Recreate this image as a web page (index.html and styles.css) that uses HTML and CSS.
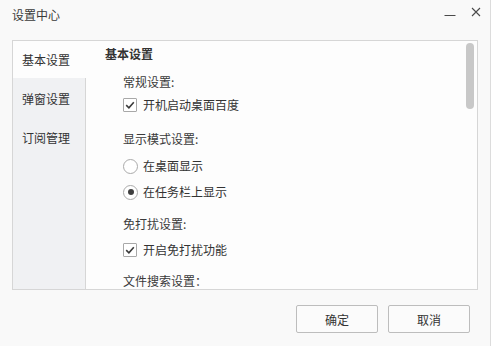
FILE: index.html
```html
<!DOCTYPE html>
<html lang="zh-CN">
<head>
<meta charset="utf-8">
<title>设置中心</title>
<link rel="stylesheet" href="styles.css">
</head>
<body>
<div class="window">
  <header class="titlebar">
    <span class="title">设置中心</span>
    <div class="controls">
      <svg class="ic-min" width="12" height="12" viewBox="0 0 12 12"><line x1="0.5" y1="6.5" x2="11.5" y2="6.5" stroke="#4a4a4a" stroke-width="1"/></svg>
      <svg class="ic-close" width="10" height="10" viewBox="0 0 10 10"><path d="M1 1 L9 9 M9 1 L1 9" stroke="#4a4a4a" stroke-width="1.1" fill="none"/></svg>
    </div>
  </header>

  <div class="panel">
    <nav class="sidebar">
      <div class="tab active">基本设置</div>
      <div class="tab-list">
        <div class="tab">弹窗设置</div>
        <div class="tab">订阅管理</div>
      </div>
    </nav>
    <div class="content">
      <div class="scroll-body">
        <div class="heading">基本设置</div>
        <div class="group">
          <div class="label l1">常规设置:</div>
          <div class="option o-cb1"><span class="checkbox"><svg width="10" height="10" viewBox="0 0 10 10"><path d="M1.2 5.2 L3.9 7.8 L8.8 2.2" stroke="#3a3a3a" stroke-width="1.6" fill="none"/></svg></span>开机启动桌面百度</div>
          <div class="label l2">显示模式设置:</div>
          <div class="option o-r1"><span class="radio"></span>在桌面显示</div>
          <div class="option o-r2"><span class="radio checked"></span>在任务栏上显示</div>
          <div class="label l3">免打扰设置:</div>
          <div class="option o-cb2"><span class="checkbox"><svg width="10" height="10" viewBox="0 0 10 10"><path d="M1.2 5.2 L3.9 7.8 L8.8 2.2" stroke="#3a3a3a" stroke-width="1.6" fill="none"/></svg></span>开启免打扰功能</div>
          <div class="label l4">文件搜索设置：</div>
        </div>
      </div>
      <div class="scrollbar"><div class="thumb"></div></div>
    </div>
  </div>

  <footer class="footer">
    <button class="btn">确定</button>
    <button class="btn">取消</button>
  </footer>
</div>
</body>
</html>
```

FILE: styles.css
```css
html, body {
  margin: 0;
  padding: 0;
  background: #f9f9f9;
}
body {
  font-family: "Noto Sans CJK SC", "Noto Sans", sans-serif;
  font-size: 12px;
  color: #333;
}
.window {
  width: 491px;
  height: 346px;
  box-sizing: border-box;
  border-right: 1px solid #dcdcdc;
  background: #f9f9f9;
  display: flex;
  flex-direction: column;
}
.titlebar {
  height: 40px;
  display: flex;
  align-items: flex-start;
  padding-left: 12px;
  box-sizing: border-box;
}
.title {
  margin-top: 6px;
  line-height: 17px;
  font-size: 12px;
  color: #3a3a3a;
}
.controls {
  margin-left: auto;
  display: flex;
  align-items: flex-start;
  padding-right: 9px;
}
.ic-min { margin-top: 9px; }
.ic-close { margin-top: 7px; margin-left: 15px; }

.panel {
  margin-left: 12px;
  width: 466px;
  height: 250px;
  box-sizing: border-box;
  border: 1px solid #d6d6d6;
  background: #fdfdfd;
  display: flex;
  overflow: hidden;
}
.sidebar {
  width: 73px;
  display: flex;
  flex-direction: column;
  flex-shrink: 0;
}
.tab {
  padding-left: 9px;
  white-space: nowrap;
  color: #333;
}
.tab.active {
  height: 37px;
  line-height: 37px;
  background: #fdfdfd;
}
.tab-list {
  flex: 1;
  background: #f0f1f3;
  border-right: 1px solid #d6d6d6;
}
.tab-list .tab {
  height: 39px;
  padding-top: 2px;
  line-height: 37px;
  box-sizing: border-box;
}
.content {
  flex: 1;
  display: flex;
  min-width: 0;
}
.scroll-body {
  flex: 1;
  padding: 5px 0 0 19px;
  overflow: hidden;
}
.heading {
  line-height: 16px;
  font-weight: bold;
  color: #333;
}
.group {
  padding-left: 18px;
}
.label {
  line-height: 16px;
  color: #3a3a3a;
}
.l1 { margin-top: 12px; }
.l2 { margin-top: 17px; }
.l3 { margin-top: 15px; }
.l4 { margin-top: 14px; }
.option {
  display: flex;
  align-items: center;
  height: 18px;
  line-height: 18px;
  color: #333;
}
.o-cb1 { margin-top: 6px; }
.o-r1 { margin-top: 10px; }
.o-r2 { margin-top: 8px; }
.o-cb2 { margin-top: 9px; }
.checkbox {
  width: 14px;
  height: 14px;
  box-sizing: border-box;
  border: 1px solid #a8a8a8;
  border-radius: 1px;
  background: #fff;
  display: flex;
  align-items: center;
  justify-content: center;
  margin-right: 6px;
}
.radio {
  width: 15px;
  height: 15px;
  box-sizing: border-box;
  border: 1px solid #aaaaaa;
  border-radius: 50%;
  background: #fff;
  margin-right: 5px;
  display: flex;
  align-items: center;
  justify-content: center;
}
.radio.checked::after {
  content: "";
  width: 6px;
  height: 6px;
  border-radius: 50%;
  background: #3f3f3f;
}
.scrollbar {
  width: 8px;
  margin: 2px 3px 0 0;
  flex-shrink: 0;
}
.thumb {
  height: 66px;
  border-radius: 4px;
  background: #c8c8c8;
}
.footer {
  display: flex;
  justify-content: flex-end;
  gap: 10px;
  padding-right: 20px;
  margin-top: 15px;
}
.btn {
  width: 82px;
  height: 28px;
  box-sizing: border-box;
  border: 1px solid #bdbdbd;
  border-radius: 2px;
  background: #fbfbfb;
  font-family: "Noto Sans CJK SC", "Noto Sans", sans-serif;
  font-size: 12px;
  color: #333;
  padding: 0;
}
```
